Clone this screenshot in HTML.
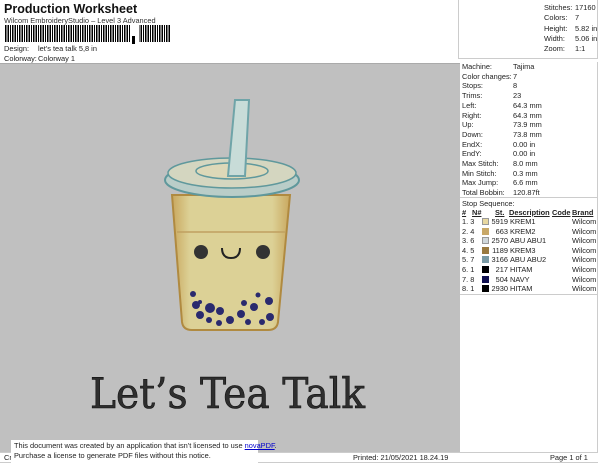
<!DOCTYPE html>
<html><head><meta charset="utf-8"><style>
*{margin:0;padding:0;box-sizing:border-box}
body{width:600px;height:464px;background:#fff;font-family:"Liberation Sans",sans-serif;position:relative;overflow:hidden;color:#222}
.a{position:absolute;white-space:nowrap}
.s{font-size:7.4px}
</style></head><body>
<div class="a" style="left:4px;top:2px;font-size:12.5px;font-weight:bold;color:#111">Production Worksheet</div>
<div class="a s" style="left:4px;top:16px;color:#333">Wilcom EmbroideryStudio – Level 3 Advanced</div>
<div class="a" style="left:5px;top:25px;width:166px;height:17px;background:repeating-linear-gradient(90deg,#000 0 1.5px,#fff 1.5px 2.3px,#000 2.3px 4px,#fff 4px 4.8px,#000 4.8px 6px,#fff 6px 7px)"></div>
<div class="a" style="left:131px;top:25px;width:8px;height:17px;background:#fff"></div>
<div class="a" style="left:132px;top:36px;width:3px;height:8px;background:#000"></div>
<div class="a s" style="left:4px;top:44px">Design:</div><div class="a s" style="left:38px;top:44px">let's tea talk 5,8 in</div>
<div class="a s" style="left:4px;top:54px">Colorway:</div><div class="a s" style="left:38px;top:54px">Colorway 1</div>
<div class="a" style="left:0;top:63px;width:460px;height:389px;background:#c0c0c0;border-top:1px solid #aaa"></div>
<div class="a" style="left:458px;top:0;width:140px;height:59px;border:1px solid #ccc;border-top:none"></div>
<div class="a s" style="left:544px;top:3px;line-height:10.3px">Stitches:<br>Colors:<br>Height:<br>Width:<br>Zoom:</div>
<div class="a s" style="left:575px;top:3px;line-height:10.3px">17160<br>7<br>5.82 in<br>5.06 in<br>1:1</div>
<div class="a" style="left:460px;top:62px;width:138px;height:390px;border-right:1px solid #ccc"></div>
<div class="a" style="left:460px;top:197px;width:138px;height:1px;background:#ccc"></div>
<div class="a" style="left:460px;top:294px;width:138px;height:1px;background:#ccc"></div>
<div class="a s" style="left:462px;top:62px;line-height:9.7px">Machine:<br>Color changes:<br>Stops:<br>Trims:<br>Left:<br>Right:<br>Up:<br>Down:<br>EndX:<br>EndY:<br>Max Stitch:<br>Min Stitch:<br>Max Jump:<br>Total Bobbin:</div>
<div class="a s" style="left:513px;top:62px;line-height:9.7px">Tajima<br>7<br>8<br>23<br>64.3 mm<br>64.3 mm<br>73.9 mm<br>73.8 mm<br>0.00 in<br>0.00 in<br>8.0 mm<br>0.3 mm<br>6.6 mm<br>120.87ft</div>
<div class="a s" style="left:462px;top:199px">Stop Sequence:</div>
<div class="a s" style="left:462px;top:208px;font-weight:bold;text-decoration:underline">#</div>
<div class="a s" style="left:472px;top:208px;font-weight:bold;text-decoration:underline">N#</div>
<div class="a s" style="left:495px;top:208px;font-weight:bold;text-decoration:underline">St.</div>
<div class="a s" style="left:509px;top:208px;font-weight:bold;text-decoration:underline">Description</div>
<div class="a s" style="left:552px;top:208px;font-weight:bold;text-decoration:underline">Code</div>
<div class="a s" style="left:572px;top:208px;font-weight:bold;text-decoration:underline">Brand</div>
<div class="a s" style="left:462px;top:217px;line-height:9.6px">1. 3<br>2. 4<br>3. 6<br>4. 5<br>5. 7<br>6. 1<br>7. 8<br>8. 1</div>
<div class="a s" style="left:490px;top:217px;line-height:9.6px;text-align:right;width:18px">5919<br>663<br>2570<br>1189<br>3166<br>217<br>504<br>2930</div>
<div class="a s" style="left:510px;top:217px;line-height:9.6px">KREM1<br>KREM2<br>ABU ABU1<br>KREM3<br>ABU ABU2<br>HITAM<br>NAVY<br>HITAM</div>
<div class="a s" style="left:572px;top:217px;line-height:9.6px">Wilcom<br>Wilcom<br>Wilcom<br>Wilcom<br>Wilcom<br>Wilcom<br>Wilcom<br>Wilcom</div>
<div class="a" style="left:482px;top:218px;width:7px;height:7px;background:#e8d8a0;border:1px solid #999"></div>
<div class="a" style="left:482px;top:227.6px;width:7px;height:7px;background:#c8a868"></div>
<div class="a" style="left:482px;top:237.2px;width:7px;height:7px;background:#d0d8dc;border:1px solid #999"></div>
<div class="a" style="left:482px;top:246.8px;width:7px;height:7px;background:#9a7a40"></div>
<div class="a" style="left:482px;top:256.4px;width:7px;height:7px;background:#7a9aa4"></div>
<div class="a" style="left:482px;top:266px;width:7px;height:7px;background:#000"></div>
<div class="a" style="left:482px;top:275.6px;width:7px;height:7px;background:#101050"></div>
<div class="a" style="left:482px;top:285.2px;width:7px;height:7px;background:#000"></div>
<svg class="a" style="left:0;top:0" width="460" height="452">
<defs><linearGradient id="b" x1="0" x2="1"><stop offset="0" stop-color="#c9a75e"/><stop offset=".15" stop-color="#dcd196"/><stop offset=".85" stop-color="#dcd196"/><stop offset="1" stop-color="#c9a75e"/></linearGradient></defs>
<path d="M172 195 L290 195 L278 322 Q277 330 268 330 L192 330 Q183 330 182 322 Z" fill="url(#b)" stroke="#b08a40" stroke-width="2"/>
<path d="M177 232 L285 232" stroke="#c0a060" stroke-width="1.5"/>
<ellipse cx="232" cy="180" rx="67" ry="17" fill="#b9cdc8" stroke="#5f989c" stroke-width="2"/>
<ellipse cx="232" cy="173" rx="64" ry="15" fill="#d4d6c0" stroke="#5f989c" stroke-width="1.5"/>
<ellipse cx="232" cy="171" rx="36" ry="8" fill="#ddd8b8" stroke="#5f989c" stroke-width="1.5"/>
<path d="M235 100 L249 100 L245 176 L228 176 Z" fill="#c8dcd8" stroke="#6fa4a8" stroke-width="2"/>
<circle cx="201" cy="252" r="7" fill="#333"/><circle cx="263" cy="252" r="7" fill="#333"/>
<path d="M222 248 Q222 258 231 258 Q240 258 240 248" fill="none" stroke="#222" stroke-width="2"/>
<g fill="#2a2a6e">
<circle cx="193" cy="294" r="3"/><circle cx="196" cy="305" r="4"/><circle cx="200" cy="315" r="4"/><circle cx="210" cy="308" r="5"/><circle cx="220" cy="311" r="4"/><circle cx="230" cy="320" r="4"/><circle cx="209" cy="320" r="3"/><circle cx="241" cy="314" r="4"/><circle cx="244" cy="303" r="3"/><circle cx="254" cy="307" r="4"/><circle cx="262" cy="322" r="3"/><circle cx="270" cy="317" r="4"/><circle cx="269" cy="301" r="4"/><circle cx="258" cy="295" r="2.5"/><circle cx="200" cy="302" r="2"/><circle cx="248" cy="322" r="3"/><circle cx="219" cy="323" r="3"/>
</g>
<text x="90" y="408" font-family="DejaVu Serif,serif" font-size="42" fill="#2e2e2e" stroke="#111" stroke-width="0.6" textLength="275" lengthAdjust="spacingAndGlyphs">Let’s Tea Talk</text>
</svg>
<div class="a" style="left:0;top:452px;width:598px;height:11px;border-top:1px solid #ccc;border-bottom:1px solid #ccc"></div>
<div class="a s" style="left:4px;top:453px">Cr</div>
<div class="a s" style="left:353px;top:453px">Printed: 21/05/2021 18.24.19</div>
<div class="a s" style="left:550px;top:453px">Page 1 of 1</div>
<div class="a" style="left:11px;top:440px;width:247px;height:23px;background:#fff"></div>
<div class="a s" style="left:14px;top:441px;line-height:10px">This document was created by an application that isn't licensed to use <span style="color:#00c;text-decoration:underline">novaPDF</span>.<br>Purchase a license to generate PDF files without this notice.</div>
</body></html>
